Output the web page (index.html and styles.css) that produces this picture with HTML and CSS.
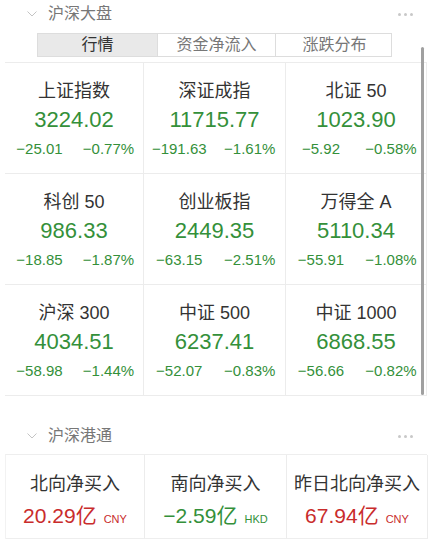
FILE: index.html
```html
<!DOCTYPE html>
<html lang="zh-CN">
<head>
    <meta charset="UTF-8">
    <meta name="viewport" content="width=device-width, initial-scale=1.0">
    <title>沪深大盘</title>
    <link rel="stylesheet" href="styles.css">
</head>
<body>
<div class="page">
    <div class="panel-head">
        <svg class="chevron" width="10" height="6" viewBox="0 0 10 6"><path d="M0.5 0.5 L5 5 L9.5 0.5" fill="none" stroke="#c4c4c4" stroke-width="1"/></svg>
        <span class="panel-title">沪深大盘</span>
        <span class="more"><i></i><i></i><i></i></span>
    </div>

    <div class="tabs">
        <div class="tab active">行情</div>
        <div class="tab">资金净流入</div>
        <div class="tab">涨跌分布</div>
    </div>

    <div class="index-grid">
        <div class="index-cell">
            <div class="name">上证指数</div>
            <div class="value down">3224.02</div>
            <div class="change down"><span>−25.01</span><span>−0.77%</span></div>
        </div>
        <div class="index-cell">
            <div class="name">深证成指</div>
            <div class="value down">11715.77</div>
            <div class="change down"><span>−191.63</span><span>−1.61%</span></div>
        </div>
        <div class="index-cell">
            <div class="name">北证 50</div>
            <div class="value down">1023.90</div>
            <div class="change down"><span>−5.92</span><span>−0.58%</span></div>
        </div>
        <div class="index-cell">
            <div class="name">科创 50</div>
            <div class="value down">986.33</div>
            <div class="change down"><span>−18.85</span><span>−1.87%</span></div>
        </div>
        <div class="index-cell">
            <div class="name">创业板指</div>
            <div class="value down">2449.35</div>
            <div class="change down"><span>−63.15</span><span>−2.51%</span></div>
        </div>
        <div class="index-cell">
            <div class="name">万得全 A</div>
            <div class="value down">5110.34</div>
            <div class="change down"><span>−55.91</span><span>−1.08%</span></div>
        </div>
        <div class="index-cell">
            <div class="name">沪深 300</div>
            <div class="value down">4034.51</div>
            <div class="change down"><span>−58.98</span><span>−1.44%</span></div>
        </div>
        <div class="index-cell">
            <div class="name">中证 500</div>
            <div class="value down">6237.41</div>
            <div class="change down"><span>−52.07</span><span>−0.83%</span></div>
        </div>
        <div class="index-cell">
            <div class="name">中证 1000</div>
            <div class="value down">6868.55</div>
            <div class="change down"><span>−56.66</span><span>−0.82%</span></div>
        </div>
    </div>

    <div class="panel-head second">
        <svg class="chevron" width="10" height="6" viewBox="0 0 10 6"><path d="M0.5 0.5 L5 5 L9.5 0.5" fill="none" stroke="#c4c4c4" stroke-width="1"/></svg>
        <span class="panel-title">沪深港通</span>
        <span class="more"><i></i><i></i><i></i></span>
    </div>

    <div class="flow-grid">
        <div class="flow-cell">
            <div class="name">北向净买入</div>
            <div class="flow-value up">20.29亿<small>CNY</small></div>
        </div>
        <div class="flow-cell">
            <div class="name">南向净买入</div>
            <div class="flow-value down">−2.59亿<small>HKD</small></div>
        </div>
        <div class="flow-cell">
            <div class="name">昨日北向净买入</div>
            <div class="flow-value up">67.94亿<small>CNY</small></div>
        </div>
    </div>

    <div class="scrollbar"></div>
</div>
</body>
</html>
```

FILE: styles.css
```css
body {
    margin: 0;
    background-color: #fff;
    font-family: 'Liberation Sans', 'Noto Sans CJK SC', sans-serif;
    color: #333;
}

.page {
    position: relative;
    width: 437px;
    height: 547px;
    overflow: hidden;
}

.panel-head {
    display: flex;
    align-items: center;
    height: 28px;
    padding: 0 24px 0 27px;
}

.panel-head.second {
    margin-top: 26px;
}

.chevron {
    margin-right: 11px;
}

.panel-title {
    font-size: 16px;
    color: #777;
    line-height: 20px;
}

.more {
    margin-left: auto;
    display: flex;
    gap: 3px;
}

.more i {
    width: 3px;
    height: 3px;
    border-radius: 50%;
    background-color: #c8c8c8;
}

.tabs {
    display: grid;
    grid-template-columns: 119px 118px 118px;
    width: 355px;
    height: 24px;
    margin: 5px 0 0 37px;
    border: 1px solid #ddd;
    box-sizing: border-box;
}

.tab {
    font-size: 16px;
    line-height: 22px;
    text-align: center;
    color: #777;
    border-left: 1px solid #ddd;
}

.tab:first-child {
    border-left: none;
}

.tab.active {
    background-color: #e9e9e9;
    color: #333;
}

.index-grid {
    display: grid;
    grid-template-columns: 139px 142px 141px;
    width: 422px;
    margin: 5px 0 0 5px;
    border-top: 1px solid #ececec;
}

.index-cell {
    height: 111px;
    padding-top: 16px;
    box-sizing: border-box;
    border-right: 1px solid #ececec;
    border-bottom: 1px solid #ececec;
    text-align: center;
}

.name {
    font-size: 18px;
    line-height: 24px;
    color: #333;
}

.value {
    margin-top: 3px;
    font-size: 22px;
    line-height: 28px;
}

.change {
    display: grid;
    grid-template-columns: 1fr 1fr;
    margin-top: 5px;
    font-size: 15px;
    line-height: 20px;
}

.down {
    color: #34903a;
}

.up {
    color: #c92c2c;
}

.flow-grid {
    display: grid;
    grid-template-columns: 139px 142px 141px;
    width: 422px;
    margin: 4px 0 0 5px;
    border-top: 1px solid #eee;
    border-left: 1px solid #f2f2f2;
    box-sizing: border-box;
}

.flow-cell {
    height: 84px;
    padding-top: 17px;
    box-sizing: border-box;
    border-right: 1px solid #ececec;
    border-bottom: 1px solid #eee;
    text-align: center;
}

.flow-value {
    margin-top: 6px;
    font-size: 21px;
    line-height: 28px;
}

.flow-value small {
    font-size: 11px;
    margin-left: 7px;
}

.scrollbar {
    position: absolute;
    left: 421px;
    top: 47px;
    width: 3px;
    height: 348px;
    border-radius: 2px;
    background-color: #a0a0a0;
}
```
